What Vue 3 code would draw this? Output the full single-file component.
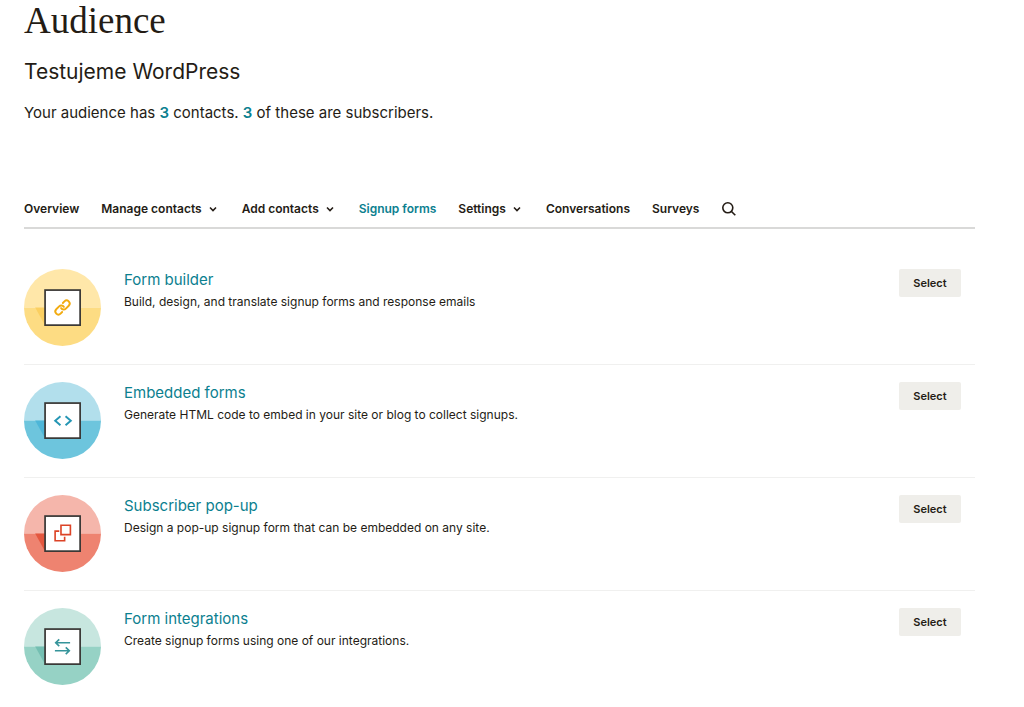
<script setup>
const tabs = [
  { label: 'Overview' },
  { label: 'Manage contacts', menu: true },
  { label: 'Add contacts', menu: true },
  { label: 'Signup forms', active: true },
  { label: 'Settings', menu: true },
  { label: 'Conversations' },
  { label: 'Surveys' }
]

const forms = [
  {
    id: 'builder',
    title: 'Form builder',
    text: 'Build, design, and translate signup forms and response emails',
    light: '#ffe7a9',
    dark: '#fddc83',
    fold: '#fbcf60'
  },
  {
    id: 'embedded',
    title: 'Embedded forms',
    text: 'Generate HTML code to embed in your site or blog to collect signups.',
    light: '#b2dfec',
    dark: '#6dc5dd',
    fold: '#4db6d8'
  },
  {
    id: 'popup',
    title: 'Subscriber pop-up',
    text: 'Design a pop-up signup form that can be embedded on any site.',
    light: '#f5b6ab',
    dark: '#ee8370',
    fold: '#e4573f'
  },
  {
    id: 'integrations',
    title: 'Form integrations',
    text: 'Create signup forms using one of our integrations.',
    light: '#c7e6df',
    dark: '#96d2c5',
    fold: '#74bfb2'
  }
]
</script>

<template>
  <main class="page">
    <header>
      <h1>Audience</h1>
      <h2>Testujeme WordPress</h2>
      <p class="summary">
        Your audience has <a href="#contacts">3</a> contacts.
        <a href="#subscribers">3</a> of these are subscribers.
      </p>
    </header>

    <nav class="tabs" aria-label="Audience">
      <template v-for="tab in tabs" :key="tab.label">
        <button v-if="tab.menu" type="button" class="tab menu" aria-haspopup="true">
          {{ tab.label }}
          <svg class="chevron" viewBox="0 0 10 10" aria-hidden="true">
            <path d="M2 3.5 5 6.5 8 3.5" />
          </svg>
        </button>
        <a v-else href="#" class="tab" :class="{ active: tab.active }">{{ tab.label }}</a>
      </template>
      <button type="button" class="tab search" aria-label="Search">
        <svg viewBox="0 0 16 16" aria-hidden="true">
          <circle cx="6.8" cy="6.8" r="5" />
          <path d="M10.5 10.5 14.3 14.3" />
        </svg>
      </button>
    </nav>

    <ul class="forms">
      <li v-for="form in forms" :key="form.id" class="form">
        <svg class="badge" viewBox="0 0 76 76" aria-hidden="true">
          <path d="M0 38a38 38 0 0 1 76 0z" :fill="form.light" />
          <path d="M0 38a38 38 0 0 0 76 0z" :fill="form.dark" />
          <path d="M11 38h10v18z" :fill="form.fold" />
          <rect x="20.8" y="20.8" width="34.6" height="34.6" fill="#fff" stroke="#3a3836" stroke-width="1.7" />
          <g
            v-if="form.id === 'builder'"
            transform="rotate(-45 38 38)"
            fill="none"
            stroke="#f2ab10"
            stroke-width="1.9"
            stroke-linecap="round"
          >
            <path d="M34.6 40.9h-2.2a3 3 0 0 1 0-6h4a3 3 0 0 1 3 3.6" />
            <path d="M41.4 35.1h2.2a3 3 0 0 1 0 6h-4a3 3 0 0 1-3-3.6" />
          </g>
          <g v-else-if="form.id === 'embedded'" fill="none" stroke="#2596b4" stroke-width="1.9">
            <path d="M36 33.8 30.8 38.2 36 42.6M41 33.8 46.2 38.2 41 42.6" />
          </g>
          <g v-else-if="form.id === 'popup'" fill="none" stroke="#dc4326" stroke-width="1.6">
            <path d="M36.5 29.8h9.3v9.3h-9.3zM34.8 35.7h-4.1v9.4h9.4v-4" />
          </g>
          <g v-else fill="none" stroke="#35949a" stroke-width="1.6">
            <path d="M45.5 34.3H31.5M34.8 31 31.3 34.3 34.8 37.6M30.5 42.2h14M41.2 38.9 44.7 42.2 41.2 45.5" />
          </g>
        </svg>
        <div class="info">
          <h3><a href="#">{{ form.title }}</a></h3>
          <p>{{ form.text }}</p>
        </div>
        <button type="button" class="select" :aria-label="`Select ${form.title}`">Select</button>
      </li>
    </ul>
  </main>
</template>

<style>
body {
  margin: 0;
  background: #fff;
}
</style>

<style scoped>
.page {
  padding: 0 49px 0 24px;
  color: #241c15;
  font-family: Inter, "Liberation Sans", sans-serif;
  font-size: 12px;
}

h1,
h2,
h3,
p,
ul {
  margin: 0;
  padding: 0;
  font-weight: 400;
}

a {
  color: #0b808f;
  text-decoration: none;
}

h1 {
  font-family: "Liberation Serif", serif;
  font-size: 37px;
  line-height: 42px;
}

h2 {
  margin-top: 16px;
  font-size: 21px;
  line-height: 28px;
}

.summary {
  margin-top: 15px;
  font-size: 15px;
  line-height: 24px;
}

.summary a {
  font-weight: 600;
}

.tabs {
  display: flex;
  gap: 22px;
  align-items: center;
  height: 36px;
  margin-top: 66px;
  border-bottom: 2px solid #d9d9d8;
}

.tab {
  display: flex;
  gap: 6px;
  align-items: center;
  padding: 0;
  border: 0;
  background: none;
  color: #241c15;
  font: inherit;
  font-weight: 600;
  line-height: 20px;
  white-space: nowrap;
}

.tab.menu {
  padding-right: 2px;
}

.tab.active {
  color: #0b808f;
}

.chevron {
  width: 10px;
  height: 10px;
}

.tab svg {
  fill: none;
  stroke: currentColor;
  stroke-width: 1.6;
}

.search svg {
  width: 16px;
  height: 16px;
}

.forms {
  margin-top: 23px;
  list-style: none;
}

.form {
  display: flex;
  align-items: flex-start;
  padding: 17px 14px 18px 0;
  border-bottom: 1px solid #f0f0ef;
}

.form:last-child {
  border-bottom: 0;
}

.badge {
  flex: none;
  width: 77px;
  height: 77px;
}

.info {
  flex: 1;
  margin-left: 23px;
}

h3 {
  font-size: 15px;
  line-height: 22px;
}

.info p {
  line-height: 22px;
}

.select {
  min-width: 62px;
  height: 28px;
  padding: 0 14px;
  border: 0;
  border-radius: 2px;
  background: #efeeea;
  color: #241c15;
  font: inherit;
  font-size: 11px;
  font-weight: 600;
}
</style>
